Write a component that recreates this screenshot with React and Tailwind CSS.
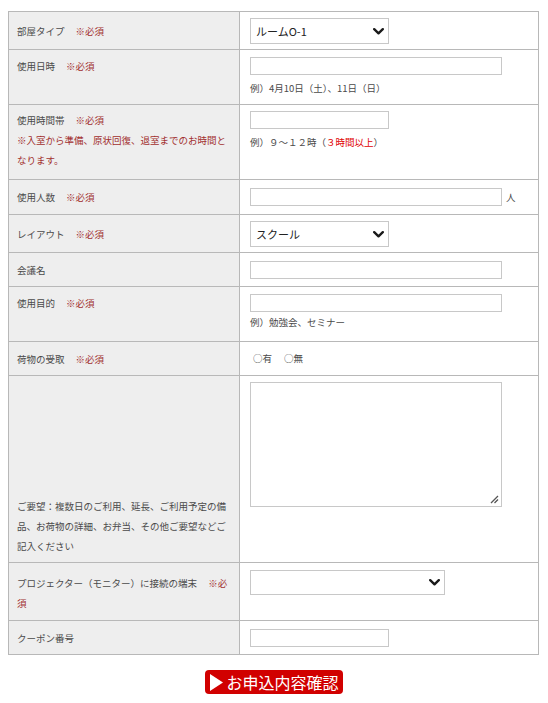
import React from "react";

const B = "border-[#b8b8b8]";

function Req() {
  return <span className="ml-[11px] text-[#a2302e]">※必須</span>;
}

function Chevron() {
  return (
    <svg width="11" height="7" viewBox="0 0 11 7" className="shrink-0">
      <path d="M1.2 1.2 L5.5 5.3 L9.8 1.2" fill="none" stroke="#1a1a1a" strokeWidth="2.4" strokeLinecap="round" strokeLinejoin="round" />
    </svg>
  );
}

function Select({ value, w, h }) {
  return (
    <div className={`flex items-center justify-between border border-[#c8c8c8] bg-white pl-[5px] pr-[4px] text-[11px] text-[#222] ${w} ${h}`}>
      <span>{value}</span>
      <Chevron />
    </div>
  );
}

function Input({ w }) {
  return <div className={`h-[18px] border border-[#c8c8c8] bg-white ${w}`} />;
}

function Row({ h, first, left, leftCls, right, rightCls }) {
  return (
    <div className={`flex ${first ? "" : `border-t ${B}`} ${h}`}>
      <div className={`flex w-[231px] shrink-0 border-r ${B} bg-[#eeeeee] pl-[8px] pr-[10px] ${leftCls}`}>
        <div className="leading-[20px] text-[#4a4a4a]">{left}</div>
      </div>
      <div className={`flex flex-1 pl-[10px] ${rightCls}`}>{right}</div>
    </div>
  );
}

export default function App() {
  return (
    <div
      className="w-full bg-white pt-[11px] pb-[9px] text-[9.5px]"
      style={{ fontFamily: '"Noto Sans CJK JP", "Noto Sans", sans-serif' }}
    >
      <div className={`ml-[8px] w-[531px] border ${B}`}>
        <Row
          first
          h="h-[37px]"
          leftCls="items-center"
          left={<>部屋タイプ<Req /></>}
          rightCls="pt-[6px]"
          right={<Select value="ルームO-1" w="w-[139px]" h="h-[26px]" />}
        />
        <Row
          h="h-[55px]"
          leftCls="pt-[6px]"
          left={<>使用日時<Req /></>}
          rightCls="flex-col pt-[7px]"
          right={
            <>
              <Input w="w-[252px]" />
              <div className="mt-[3px] leading-[20px] text-[#4a4a4a]">例）4月10日（土）、11日（日）</div>
            </>
          }
        />
        <Row
          h="h-[75px]"
          leftCls="pt-[5px]"
          left={
            <>
              使用時間帯<Req />
              <br />
              <span className="text-[#a2302e]">※入室から準備、原状回復、退室までのお時間と</span>
              <br />
              <span className="text-[#a2302e]">なります。</span>
            </>
          }
          rightCls="flex-col pt-[6px]"
          right={
            <>
              <Input w="w-[139px]" />
              <div className="mt-[3px] leading-[20px] text-[#4a4a4a]">
                例）９～１２時（<span className="text-[#e00000]">３時間以上</span>）
              </div>
            </>
          }
        />
        <Row
          h="h-[35px]"
          leftCls="items-center"
          left={<>使用人数<Req /></>}
          rightCls="items-center"
          right={
            <>
              <Input w="w-[252px]" />
              <span className="ml-[4px] text-[#4a4a4a]">人</span>
            </>
          }
        />
        <Row
          h="h-[38px]"
          leftCls="items-center"
          left={<>レイアウト<Req /></>}
          rightCls="pt-[6px]"
          right={<Select value="スクール" w="w-[139px]" h="h-[26px]" />}
        />
        <Row
          h="h-[34px]"
          leftCls="items-center"
          left={<>会議名</>}
          rightCls="items-center"
          right={<Input w="w-[252px]" />}
        />
        <Row
          h="h-[55px]"
          leftCls="pt-[6px]"
          left={<>使用目的<Req /></>}
          rightCls="flex-col pt-[7px]"
          right={
            <>
              <Input w="w-[252px]" />
              <div className="leading-[20px] text-[#4a4a4a]">例）勉強会、セミナー</div>
            </>
          }
        />
        <Row
          h="h-[34px]"
          leftCls="items-center"
          left={<>荷物の受取<Req /></>}
          rightCls="items-center"
          right={
            <div className="flex pl-[3px] text-[#4a4a4a]">
              <span>○有</span>
              <span className="ml-[12px]">○無</span>
            </div>
          }
        />
        <Row
          h="h-[187px]"
          leftCls="items-end pb-[6px]"
          left={
            <>
              ご要望：複数日のご利用、延長、ご利用予定の備
              <br />
              品、お荷物の詳細、お弁当、その他ご要望などご
              <br />
              記入ください
            </>
          }
          rightCls="pt-[6px]"
          right={
            <div className="relative h-[125px] w-[252px] border border-[#c8c8c8] bg-white">
              <svg width="9" height="9" viewBox="0 0 9 9" className="absolute bottom-[2px] right-[2px]">
                <path d="M1 8 L8 1 M4.5 8 L8 4.5" stroke="#555" strokeWidth="1.3" />
              </svg>
            </div>
          }
        />
        <Row
          h="h-[58px]"
          leftCls="pt-[10px]"
          left={
            <>
              <span>プロジェクター（モニター）に接続の端末</span>
              <span className="ml-[11px] text-[#a2302e]">※必</span>
              <br />
              <span className="text-[#a2302e]">須</span>
            </>
          }
          rightCls="pt-[7px]"
          right={<Select value="" w="w-[195px]" h="h-[25px]" />}
        />
        <Row
          h="h-[34px]"
          leftCls="items-center"
          left={<>クーポン番号</>}
          rightCls="items-center"
          right={<Input w="w-[139px]" />}
        />
      </div>
      <div className="mt-[15px] flex justify-center pr-[1px]">
        <div className="flex h-[24px] w-[138px] items-center gap-[4px] rounded-[4px] bg-[#d10000] pl-[5px]">
          <svg width="13" height="17" viewBox="0 0 13 17">
            <polygon points="0,0 13,8.5 0,17" fill="#fff" />
          </svg>
          <span className="text-[16px] leading-none text-white">お申込内容確認</span>
        </div>
      </div>
    </div>
  );
}
